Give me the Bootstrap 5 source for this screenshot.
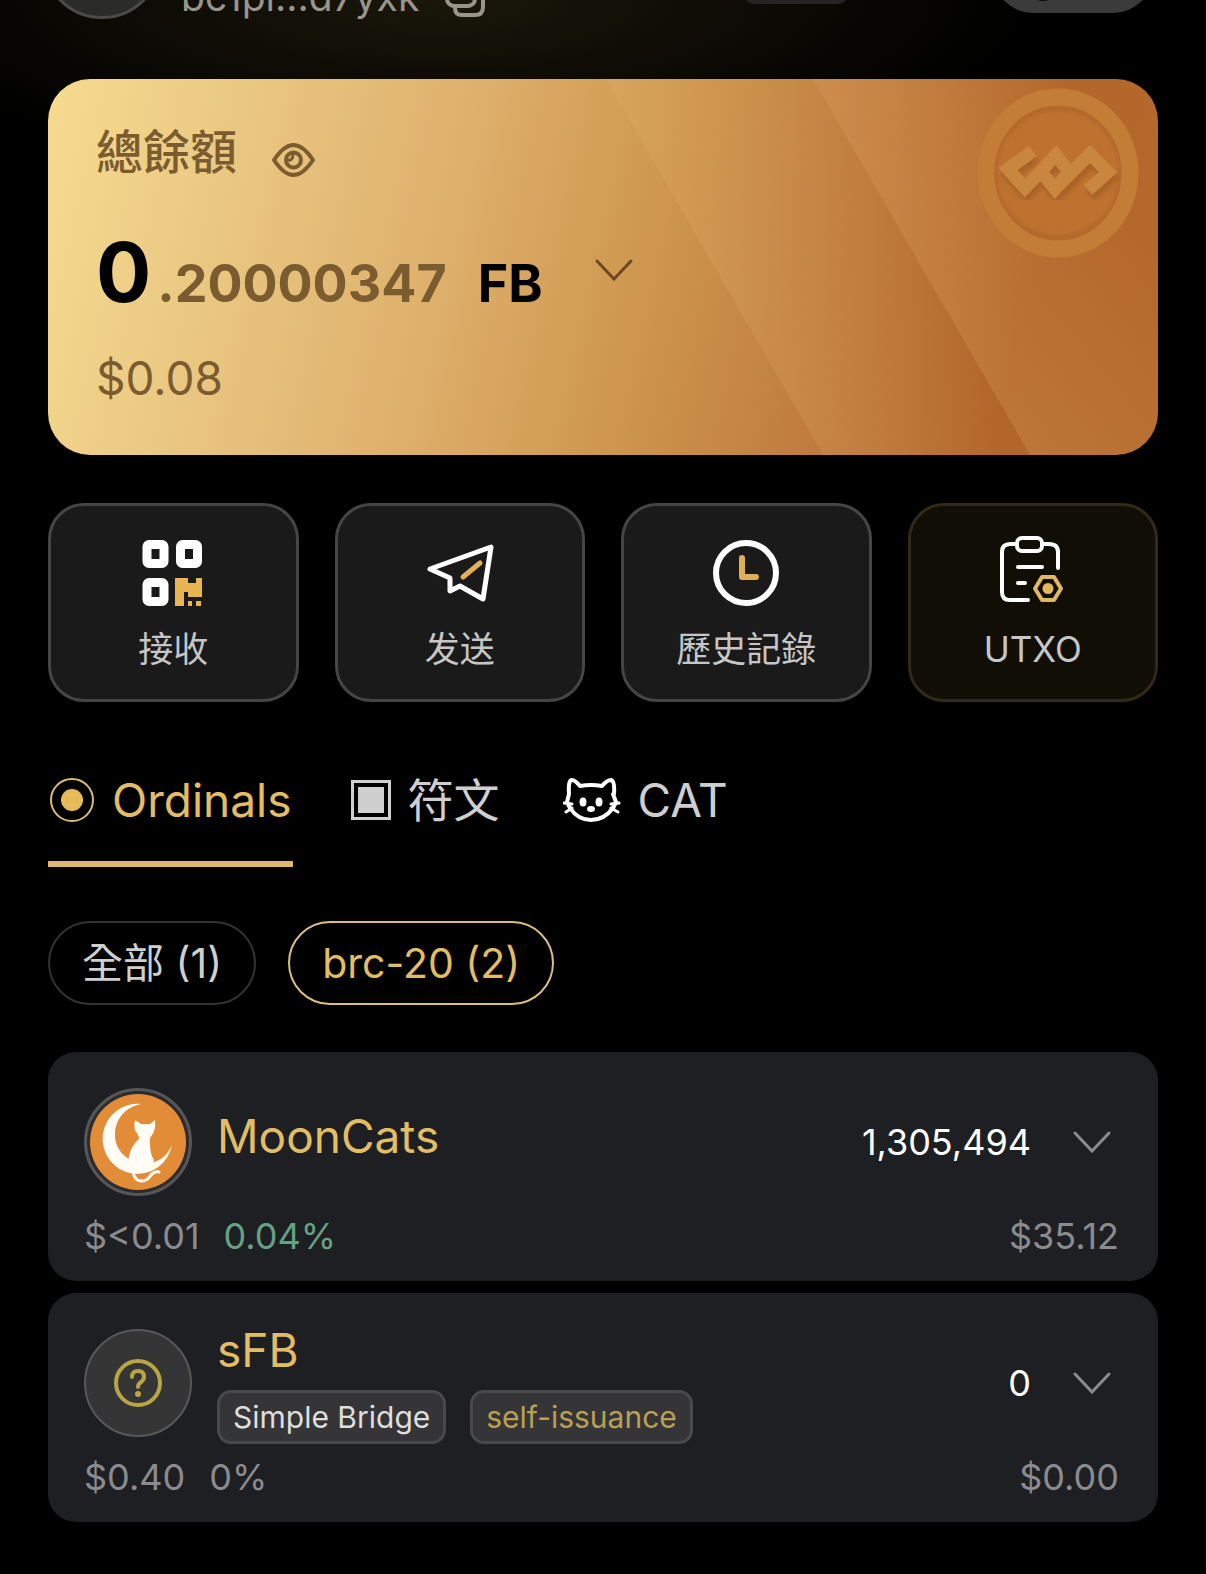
<!DOCTYPE html>
<html lang="zh-Hant">
<head>
<meta charset="utf-8">
<meta name="viewport" content="width=device-width, initial-scale=1">
<title>Wallet</title>
<link rel="stylesheet" href="https://cdn.jsdelivr.net/npm/bootstrap@5.3.0/dist/css/bootstrap.min.css">
<style>
  :root { --gold: #e3bd66; --soft: #cfcfcf; --dim: #8b8b8f; --panel: #1e1f22; }
  body {
    font-family: Inter, "Noto Sans CJK TC", sans-serif;
    background: radial-gradient(ellipse 600px 170px at 440px 0, #1a170a, #000) no-repeat #000;
    color: #fff;
  }
  svg { display: block; flex: none; }
  button { font-family: inherit; }
  .wallet { padding: 0 48px 52px; }

  .topbar { height: 19px; margin-bottom: 60px; overflow: hidden; }
  .account-pic { width: 120px; height: 120px; margin: 0 19px 0 -6px; background: #2b2b28; border: 3px solid #4a4a48; }
  .address { font-size: 39px; line-height: 44px; color: #9a958c; }
  .copy-btn { margin-left: 26px; color: #9a958c; }
  .net-chip { width: 106px; height: 60px; margin: 0 144px 15px auto; border-radius: 12px; background: #242424; }
  .mode-chip { width: 160px; height: 80px; margin: 0 5px 6px 0; border-radius: 40px; background: #3b3b3c; padding-left: 34px; padding-bottom: 12px; }
  .mode-dot { width: 32px; height: 32px; background: #0a0a0a; }

  .balance {
    border-radius: 42px; padding: 45px 48px 49px; color: #7b5c30;
    background:
      linear-gradient(60deg, transparent 74%, rgba(226,165,105,.24) 74%, rgba(200,120,60,.08) 92%),
      linear-gradient(60deg, transparent 58.4%, rgba(235,185,120,.16) 58.4%, rgba(200,130,60,0) 74%),
      linear-gradient(103deg, #f7db90 0%, #eccb84 14%, #deb06c 36%, #d09950 52%, #c28040 68%, #b26528 86%, #b3682b 100%);
  }
  .coin { right: 19px; top: 8px; }
  .lh-title { font-size: 46px; line-height: 56px; }
  .cjk-title { font-size: 47px; line-height: 56px; }
  .eye-btn { margin: 15px 0 0 35px; }
  .amount-row { height: 100px; margin: 43px 0 27px; }
  .amount-int { font-size: 82px; line-height: 100px; }
  .amount-dec { font-size: 52px; line-height: 64px; margin-left: 6px; }
  .amount-unit { font-size: 52px; line-height: 64px; margin-left: 31px; }
  .unit-btn { margin: 36px 0 0 52px; align-self: start; }

  .actions { --bs-gutter-x: 36px; margin-top: 48px; }
  .action-btn { border: 3px solid #454545; border-radius: 36px; background: #1a1a1a; padding: 30px 0 26px; }
  .action-btn.gilded { background: #110e06; border-color: #33291a; }
  .action-text { font-size: 35px; line-height: 48px; margin-top: 19px; color: #c6c6c6; }

  .tabs { margin-top: 70px; gap: 58px; }
  .tab-item { color: var(--soft); padding: 0 2px 33px 0; border-bottom: 6px solid transparent; text-decoration: none; }
  .tab-item.active { color: var(--gold); border-color: #deb670; }

  .filters { margin-top: 54px; gap: 32px; }
  .filter-btn { border: 2px solid #333; border-radius: 42px; background: #000; color: var(--soft); font-size: 41px; line-height: 48px; padding: 16px 32px; }
  .filter-btn.active { border-color: #d9c07f; color: var(--gold); }

  .tokens { margin-top: 47px; gap: 12px; }
  .token { background: var(--panel); border-radius: 28px; padding: 36px 39px 23px 36px; }
  .token-main { height: 108px; }
  .token-name { color: var(--gold); padding-bottom: 12px; }
  .token-info { margin-left: 25px; }
  .token-tag { font-size: 30px; line-height: 38px; padding: 5px 13px; border: 3px solid #49494b; border-radius: 14px; background: #353537; color: #dedede; }
  .token-tag.gilded { color: #b9a055; }
  .figure-text { font-size: 36px; line-height: 44px; }
  .token-foot { margin-top: 18px; color: var(--dim); }
  .up { color: #66a183; }
  .expand-btn { margin: 0 8px 0 42px; color: var(--dim); }
</style>
<script src="https://cdn.jsdelivr.net/npm/bootstrap@5.3.0/dist/js/bootstrap.bundle.min.js"></script>
</head>
<body>
<main class="wallet container-fluid">

  <header class="topbar d-flex align-items-end">
    <div class="account-pic rounded-circle flex-shrink-0"></div>
    <span class="address">bc1pl...d7yxk</span>
    <button class="copy-btn border-0 bg-transparent p-0" aria-label="Copy address">
      <svg width="42" height="42" viewBox="0 0 42 42" fill="none" stroke="currentColor" stroke-width="4"><rect x="2" y="0" width="28" height="29" rx="7"/><path d="M10 30v1q0 7 7 7h13q8 0 8-8V15q0-6-6-6"/></svg>
    </button>
    <div class="net-chip"></div>
    <div class="mode-chip d-flex align-items-end"><div class="mode-dot rounded-circle"></div></div>
  </header>

  <section class="balance position-relative">
    <svg class="coin position-absolute" width="164" height="172" viewBox="976 87 164 172" fill="none">
      <defs><filter id="soft"><feGaussianBlur stdDeviation="2"/></filter></defs>
      <ellipse cx="1059" cy="173" rx="72" ry="76" fill="#bf7230"/>
      <ellipse cx="1059" cy="173" rx="64" ry="65" stroke="#a8622a" stroke-width="5" filter="url(#soft)" opacity=".7"/>
      <ellipse cx="1059" cy="173" rx="72" ry="76" stroke="#c47d36" stroke-width="17"/>
      <g stroke-width="13">
        <path transform="translate(2 6)" stroke="#9c5822" opacity=".6" filter="url(#soft)" d="M1034 151 1009 169l17 19 31-33 13 17-14 17-13-16M1056 189l35-35 18 18-20 18"/>
        <path stroke="#c9863f" d="M1034 151 1009 169l17 19 31-33 13 17-14 17-13-16M1056 189l35-35 18 18-20 18"/>
      </g>
    </svg>
    <div class="d-flex align-items-center">
      <span class="cjk-title fw-medium">總餘額</span>
      <button class="eye-btn border-0 bg-transparent p-0" aria-label="Hide balance">
        <svg width="43" height="34" viewBox="0 0 43 34" fill="none" stroke="#7b5c30" stroke-width="4"><path d="M2 17Q12 2 21.500 2T41 17Q31 32 21.500 32T2 17Z"/><circle cx="21.500" cy="17" r="7.500"/><path stroke-width="3" d="M16 17q5 1 5-6"/></svg>
      </button>
    </div>
    <div class="amount-row d-flex align-items-baseline fw-bold">
      <span class="amount-int text-black">0</span>
      <span class="amount-dec">.20000347</span>
      <span class="amount-unit text-black">FB</span>
      <button class="unit-btn border-0 bg-transparent p-0" aria-label="Choose unit">
        <svg width="38" height="22" viewBox="0 0 38 22" fill="none" stroke="#6d4826" stroke-width="3" stroke-linecap="round"><path d="M2 2l17 18L36 2"/></svg>
      </button>
    </div>
    <div class="lh-title">$0.08</div>
  </section>

  <section class="actions row">
    <div class="col-3"><button class="action-btn w-100 d-flex flex-column align-items-center">
      <svg width="70" height="70" viewBox="139 536 70 70"><g fill="none" stroke="#fff" stroke-width="9"><rect x="148" y="544.500" width="17" height="19" rx="2"/><rect x="181.500" y="544.500" width="17" height="19" rx="2"/><rect x="148" y="582.500" width="17" height="19" rx="2"/></g><path fill="#e8b551" d="M176 578h13v5h8v-5h6v19h-14v-5h-4v14h-9zM189 601h4v5h-4zM197 601h5v5h-5z"/></svg>
      <span class="action-text">接收</span></button></div>
    <div class="col-3"><button class="action-btn w-100 d-flex flex-column align-items-center">
      <svg width="70" height="70" viewBox="425 536 70 70" fill="none" stroke-linejoin="round" stroke-linecap="round"><path stroke="#fff" stroke-width="5" d="M430 569 491 547l-8 52-23-13-10 5v-13z"/><path stroke="#e3b055" stroke-width="5" d="M463 577l17-14"/></svg>
      <span class="action-text" lang="zh-Hans">发送</span></button></div>
    <div class="col-3"><button class="action-btn w-100 d-flex flex-column align-items-center">
      <svg width="70" height="70" viewBox="711 536 70 70" fill="none"><circle cx="746" cy="573" r="30" stroke="#fff" stroke-width="6"/><path stroke="#dfae52" stroke-width="6" stroke-linecap="round" stroke-linejoin="round" d="M742 558v19h14"/></svg>
      <span class="action-text">歷史記錄</span></button></div>
    <div class="col-3"><button class="action-btn gilded w-100 d-flex flex-column align-items-center">
      <svg width="70" height="70" viewBox="998 536 70 70" fill="none" stroke-linecap="round" stroke-linejoin="round"><g stroke="#fff" stroke-width="4"><path d="M1017 544h-7q-8 0-8 8v40q0 8 8 8h18M1043 544h6q9 0 9 8v16M1018 567h24M1018 583h7"/><rect x="1017" y="538" width="25" height="13" rx="5"/></g><path stroke="#dfb866" stroke-width="4" d="M1042 577h12l7 11.500-7 11.500h-12l-7-11.500z"/><circle cx="1048" cy="588.500" r="5.500" fill="#e3b75c"/></svg>
      <span class="action-text">UTXO</span></button></div>
  </section>

  <nav class="tabs d-flex lh-title">
    <a href="#ordinals" class="tab-item active d-flex align-items-center gap-3">
      <svg width="48" height="46" viewBox="-1 0 48 46"><circle cx="23" cy="23" r="21" fill="none" stroke="#d9bd79" stroke-width="2"/><circle cx="23" cy="23" r="11" fill="#e6bb5c"/></svg>
      <span>Ordinals</span></a>
    <a href="#runes" class="tab-item d-flex align-items-center gap-3">
      <svg width="40" height="40" viewBox="0 0 40 40"><path fill="none" stroke="#cfcfcf" stroke-width="3" d="M1.500 1.500h37v37h-37z"/><path fill="#cfcfcf" d="M7 7h26v26H7z"/></svg>
      <span>符文</span></a>
    <a href="#cat" class="tab-item d-flex align-items-center gap-3 ms-1">
      <svg width="58" height="44" viewBox="565 777 58 44" fill="none" stroke="#fff" stroke-width="4" stroke-linecap="round" stroke-linejoin="round"><path d="M571 793q-1-14 3-14 3 0 8 6 11-2 22 0 5-6 9-6 4 1 3 14M571 793l-2 8 3 6q8 12 21 12t22-12l3-6-3-8"/><path stroke-width="3" d="M566 802l8 1M568 811l6-4M621 802l-8 1M620 811l-7-4"/><g fill="#fff" stroke="none"><ellipse cx="585" cy="801" rx="3.500" ry="4.500"/><ellipse cx="601" cy="801" rx="3.500" ry="4.500"/><ellipse cx="593" cy="808" rx="4" ry="3"/></g></svg>
      <span>CAT</span></a>
  </nav>

  <div class="filters d-flex">
    <button class="filter-btn">全部 (1)</button>
    <button class="filter-btn active">brc-20 (2)</button>
  </div>

  <section class="tokens d-flex flex-column">
    <article class="token">
      <div class="token-main d-flex align-items-center">
        <svg width="108" height="108" viewBox="0 0 108 108"><circle cx="54" cy="54" r="52.500" fill="#2c2c2e" stroke="#565659" stroke-width="3"/><circle cx="54" cy="54" r="48" fill="#e38c37"/><g fill="#fffdf6"><path d="M57 16A35 35 0 1 0 88 57C82 71 70 77 57 75 41 73 30 60 31 45 32 30 42 19 57 16Z"/><path d="M51 32l6 4h9l5-4q1 10-3 15-3 3-2 9 0 10 4 16l-3 10H48q-5-6-3-14 2-10 10-17 0-3-2-6-4-4-2-13z"/></g><path fill="none" stroke="#fffdf6" stroke-width="3" stroke-linecap="round" d="M49 84q2 10 10 9 5-1 8-6 3-4 8-3"/></svg>
        <div class="token-info"><div class="token-name lh-title">MoonCats</div></div>
        <span class="figure-text ms-auto">1,305,494</span>
        <button class="expand-btn border-0 bg-transparent p-0" aria-label="Expand MoonCats"><svg width="38" height="22" viewBox="0 0 38 22" fill="none" stroke="currentColor" stroke-width="3" stroke-linecap="round"><path d="M2 2l17 18L36 2"/></svg></button>
      </div>
      <div class="token-foot figure-text d-flex">
        <span>$&lt;0.01</span><span class="up ms-4">0.04%</span><span class="ms-auto">$35.12</span>
      </div>
    </article>

    <article class="token">
      <div class="token-main d-flex align-items-center">
        <svg width="108" height="108" viewBox="0 0 108 108" fill="none"><circle cx="54" cy="54" r="53" fill="#353536" stroke="#58585a" stroke-width="2"/><g stroke="#b9a545" stroke-width="4" stroke-linecap="round"><circle cx="54" cy="54" r="22"/><path d="M48 48q0-6 6-6t6 6q0 3-3 5t-3 5"/></g><circle cx="54" cy="65" r="3" fill="#b9a545"/></svg>
        <div class="token-info">
          <div class="token-name lh-title">sFB</div>
          <div class="d-flex gap-4"><span class="token-tag">Simple Bridge</span><span class="token-tag gilded">self-issuance</span></div>
        </div>
        <span class="figure-text ms-auto">0</span>
        <button class="expand-btn border-0 bg-transparent p-0" aria-label="Expand sFB"><svg width="38" height="22" viewBox="0 0 38 22" fill="none" stroke="currentColor" stroke-width="3" stroke-linecap="round"><path d="M2 2l17 18L36 2"/></svg></button>
      </div>
      <div class="token-foot figure-text d-flex">
        <span>$0.40</span><span class="ms-4">0%</span><span class="ms-auto">$0.00</span>
      </div>
    </article>
  </section>
</main>
</body>
</html>
